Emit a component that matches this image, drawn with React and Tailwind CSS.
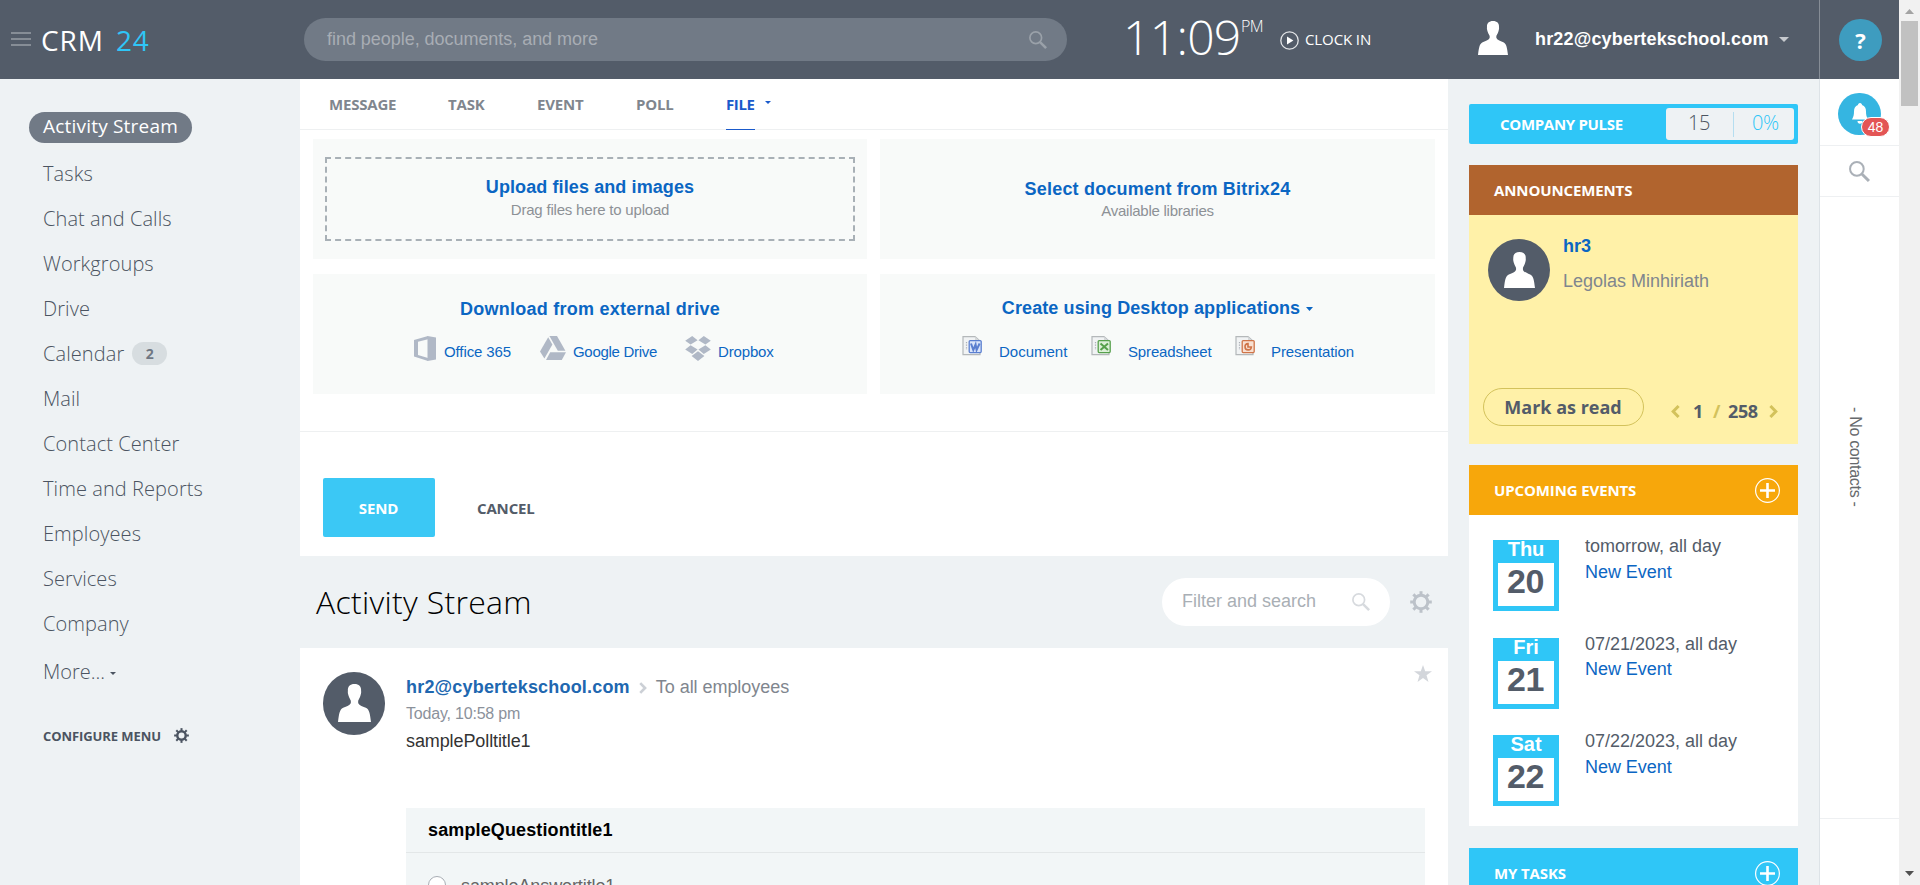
import React from 'react';

const ARIAL = "font-['Liberation_Sans',Arial,sans-serif]";

function Person({ className }) {
  return (
    <svg className={className} viewBox="0 0 90 102" preserveAspectRatio="none" fill="currentColor">
      <path d="M45 0C57 0 64 7 63 18C64 24 62 28 61 32C59 38 56 42 55 45V50C57 57 66 59 76 64C86 69 87 80 90 102H0C3 80 4 69 14 64C24 59 33 57 35 50V45C34 42 31 38 29 32C28 28 26 24 27 18C26 7 33 0 45 0Z" />
    </svg>
  );
}

function Gear({ className, r = 6.8, sw = 3 }) {
  return (
    <svg className={className} viewBox="0 0 22 22" fill="none" stroke="currentColor">
      <circle cx="11" cy="11" r={r} strokeWidth={sw} />
      {[0, 45, 90, 135, 180, 225, 270, 315].map((a) => (
        <path key={a} d="M11 0.2V4" strokeWidth="3" transform={`rotate(${a} 11 11)`} />
      ))}
    </svg>
  );
}

function Magnifier({ className }) {
  return (
    <svg className={className} viewBox="0 0 20 20" fill="none" stroke="currentColor">
      <circle cx="7.5" cy="7.5" r="6.5" strokeWidth="1.9" />
      <path d="M12.3 12.3L19 19" strokeWidth="2.8" />
    </svg>
  );
}

function Plus() {
  return (
    <svg className="h-[25px] w-[25px]" viewBox="0 0 25 25" fill="none" stroke="#fff">
      <circle cx="12.5" cy="12.5" r="11.9" strokeWidth="1.2" />
      <path d="M12.5 5V20M5 12.5H20" strokeWidth="2.6" />
    </svg>
  );
}

function Chevron({ className, flip }) {
  return (
    <svg className={className} viewBox="0 0 9 13" fill="none" stroke="currentColor" strokeWidth="3">
      <path d={flip ? 'M7.6 1L2.2 6.5L7.6 12' : 'M1.4 1L6.8 6.5L1.4 12'} />
    </svg>
  );
}

function Caret({ className }) {
  return (
    <svg className={className} viewBox="0 0 10 6" preserveAspectRatio="none" fill="currentColor">
      <path d="M0 0H10L5 6Z" />
    </svg>
  );
}

function OfficeFile({ color, light, children }) {
  return (
    <svg className="h-[20px] w-[20px] shrink-0" viewBox="0 0 20 20">
      <path d="M1 .7H13L18 5V18.6H1Z" fill="#f1f3f4" stroke="#b4b8ba" strokeWidth="1.2" />
      <path d="M13 .7V5H18Z" fill="#d5d8da" />
      <path d="M4.5 6V14" stroke="#a9adb5" strokeWidth="1.2" strokeDasharray="1.2 1.4" />
      <rect x="7.2" y="4.6" width="12" height="12" rx="1" fill={light} stroke={color} strokeWidth="1.3" />
      <g fill="none" stroke={color} strokeWidth="2">{children}</g>
    </svg>
  );
}

function Header() {
  return (
    <header className="flex h-[79px] w-full shrink-0 bg-[#535c69] text-white">
      <div className="flex w-[304px] items-center pb-0.5 pl-[11px]">
        <svg className="h-[14px] w-5" viewBox="0 0 20 14" fill="#868d96">
          <path d="M0 0H20V2H0ZM0 6H20V8H0ZM0 12H20V14H0Z" />
        </svg>
        <div className="mt-[2px] ml-[10px] text-[28px] leading-[40px] font-medium">
          <span className="inline-block w-[75px] tracking-[0.9px]">CRM</span>
          <span className="tracking-[0.8px] text-[#2fc6f7]">24</span>
        </div>
      </div>
      <div className={`mt-[18px] flex h-[43px] w-[763px] items-center justify-between rounded-full bg-[#717a86] pr-[20px] pl-[23px] text-lg tracking-[-0.04px] text-[#a8adb4] ${ARIAL}`}>
        <span className="pb-[2px]">find people, documents, and more</span>
        <Magnifier className="h-[18px] w-[18px] text-[#9aa1a9]" />
      </div>
      <div className="flex w-[411px] pl-[56px]">
        <span className="mt-[9px] w-[118px] text-5xl leading-[56px] font-light tracking-[-0.7px]">11:09</span>
        <span className="mt-[14px] w-[39px] text-base leading-6 font-light tracking-[-0.6px]">PM</span>
        <svg className="mt-[31px] h-[19px] w-[19px]" viewBox="0 0 19 19" fill="none" stroke="#e4e6e8" strokeWidth="1.3">
          <circle cx="9.5" cy="9.5" r="8.7" />
          <path d="M7 5.6L13.4 9.5L7 13.4Z" fill="#fff" stroke="none" />
        </svg>
        <span className="mt-[29px] ml-1.5 text-[15px] leading-5 tracking-[-0.1px]">CLOCK IN</span>
      </div>
      <div className="flex w-[341px] items-center">
        <Person className="mb-1 h-[34px] w-[30px]" />
        <span className={`mb-0.5 ml-[27px] w-[244px] text-lg font-bold tracking-[0.17px] ${ARIAL}`}>hr22@cybertekschool.com</span>
        <Caret className="mb-px h-[5px] w-[10px] text-[#c6c9ce]" />
      </div>
      <div className="flex w-20 justify-center border-l border-[#868d96] pt-[19px] pl-[2px]">
        <div className="flex h-[42px] w-[43px] items-center justify-center rounded-full bg-[#3e9cbf] text-[22px] font-bold">?</div>
      </div>
    </header>
  );
}

const MENU = ['Tasks', 'Chat and Calls', 'Workgroups', 'Drive', 'Calendar', 'Mail', 'Contact Center', 'Time and Reports', 'Employees', 'Services', 'Company'];

function Sidebar() {
  return (
    <nav className="w-[300px] shrink-0 pt-[33px] text-[20px] font-light text-[#4b5461]">
      <div className="ml-[29px] h-[31px] w-[163px] rounded-full bg-[#717a86] pl-[14px] text-[19px] leading-[28px] font-medium tracking-[0.2px] text-white">Activity Stream</div>
      <div className="mt-[7px] pl-[43px]">
        {MENU.map((m) => (
          <div key={m} className="flex h-[45px] items-center pt-[2px] tracking-[0.08px]">
            {m}
            {m === 'Calendar' && (
              <span className="ml-[8px] flex h-[23px] w-[35px] items-center justify-center rounded-full bg-[#d7dde0] text-[14px] font-bold text-[#6f7783]">2</span>
            )}
          </div>
        ))}
        <div className="mt-1 flex h-[45px] items-center pt-px">
          More...
          <Caret className="mt-0.5 ml-[5px] h-[3px] w-[6px]" />
        </div>
        <div className="mt-[29px] flex h-6 items-center text-[13px] font-bold tracking-[-0.08px]">
          <span className="w-[131px] pt-[3px]">CONFIGURE MENU</span>
          <Gear className="h-[15px] w-[15px]" r={6.2} sw={3.6} />
        </div>
      </div>
    </nav>
  );
}

function Drives() {
  return (
    <div className="flex pt-[15px] pl-[101px] text-left text-[15px] leading-[32px] font-normal">
      <svg className="h-[25px] w-[22px]" viewBox="0 0 22 25" fill="#b0b8c6">
        <path fillRule="evenodd" d="M0 4L14 0V3.300L4 5.700V19L14 22V25L0 20.500Z" />
        <path d="M13.500 0.100L22 1.500V23.500L13.500 25Z" />
      </svg>
      <span className="ml-2 w-24 tracking-[-0.1px]">Office 365</span>
      <svg className="h-6 w-[26px]" viewBox="0 0 26 24" fill="#b0b8c6">
        <path d="M8.2 1.3L12.4 8.4L4.4 22.5L0 15.5Z" />
        <path d="M9.4 0H17L25.4 14.8H17.8Z" />
        <path d="M10.2 16.3H26L21.8 24H6Z" />
      </svg>
      <span className="ml-[7px] w-28 tracking-[-0.3px]">Google Drive</span>
      <svg className="h-[25px] w-[26px]" viewBox="0 0 26 25" fill="#b0b8c6">
        <path d="M7.2 0L12.6 4.2L5.6 8.6L.2 4.7ZM18.8 0L13.4 4.2L20.4 8.6L25.8 4.7ZM5.6 9.2L12.6 13.6L7.2 18L.2 13.5ZM20.4 9.2L13.4 13.6L18.8 18L25.8 13.5ZM13 15.2L19.4 20L13 25L6.6 20Z" />
      </svg>
      <span className="ml-[7px] tracking-[-0.15px]">Dropbox</span>
    </div>
  );
}

function Composer() {
  const box = 'h-[120px] bg-[#f8faf9] text-center';
  const title = 'text-lg leading-6 font-bold text-[#0b66c3]';
  const sub = 'text-[15px] text-[#8d9196]';
  return (
    <section className="h-[477px] bg-white">
      <div className="flex h-[51px] border-b border-[#eef0f1] pl-[29px] text-[15px] leading-[51px] font-bold tracking-[-0.2px] text-[#80868e]">
        <span className="w-[119px]">MESSAGE</span>
        <span className="w-[89px]">TASK</span>
        <span className="w-[99px]">EVENT</span>
        <span className="w-[90px]">POLL</span>
        <span className="h-[51px] w-[29px] border-b border-[#1a5acb] tracking-[-0.4px] text-[#1a5acb]">FILE</span>
        <Caret className="mt-[22px] ml-2.5 h-[3px] w-[6px] text-[#1a5acb]" />
      </div>
      <div className={`mt-[9px] flex gap-x-[13px] px-[13px] ${ARIAL}`}>
        <div className="flex w-[554px] flex-col gap-[15px]">
          <div className={`${box} px-3 pt-[18px]`}>
            <div className="h-[84px] border-2 border-dashed border-[#a8b0b6] pt-[16px]">
              <div className={`${title} tracking-[0.1px]`}>Upload files and images</div>
              <div className={`${sub} leading-[22px] tracking-[-0.2px]`}>Drag files here to upload</div>
            </div>
          </div>
          <div className={`${box} ${title} pt-[23px] text-center`}>
            <div className="tracking-[0.25px]">Download from external drive</div>
            <Drives />
          </div>
        </div>
        <div className="flex w-[555px] flex-col gap-[15px]">
          <div className={`${box} pt-[38px]`}>
            <div className={`${title} tracking-[0.2px]`}>Select document from Bitrix24</div>
            <div className={`${sub} leading-5 tracking-[-0.25px]`}>Available libraries</div>
          </div>
          <div className={`${box} ${title} pt-[22px]`}>
            <div className="flex items-center justify-center tracking-[0.1px]">
              Create using Desktop applications
              <Caret className="mt-0.5 ml-[6px] h-[4px] w-[7px]" />
            </div>
            <div className="flex pt-4 pl-[82px] text-[15px] leading-[32px] font-normal">
              <OfficeFile color="#5b7fd0" light="#dbe5fa"><path d="M9 7.5L11.3 14L13.6 8.5L14.6 14L17.6 7.5" /></OfficeFile>
              <span className="ml-[17px] w-[92px] text-left">Document</span>
              <OfficeFile color="#56a04c" light="#dcefd8"><path d="M9.5 7.5L17 14M17 7.5L9.5 14" /></OfficeFile>
              <span className="ml-[17px] w-[107px] text-left tracking-[-0.15px]">Spreadsheet</span>
              <OfficeFile color="#cf7448" light="#f8e0d2"><path d="M13 7.500A3.200 3.200 0 1 0 16.400 11H13Z" strokeWidth="1.6" /></OfficeFile>
              <span className="ml-[16px] tracking-[-0.1px]">Presentation</span>
            </div>
          </div>
        </div>
      </div>
      <div className="mt-[37px] flex border-t border-[#eef0f1] pt-[46px] pl-[23px] text-[15px] leading-[60px] font-bold tracking-[-0.15px]">
        <button className="h-[59px] w-28 rounded-[2px] bg-[#3bc8f5] pr-px text-white">SEND</button>
        <span className="ml-[42px] text-[#535c69]">CANCEL</span>
      </div>
    </section>
  );
}

function Post() {
  return (
    <section className="flex h-[237px] overflow-hidden bg-white pt-6 pr-[16px] pl-[23px]">
      <div className="flex h-[63px] w-[62px] shrink-0 justify-center rounded-full bg-[#535c69] pt-3 text-white">
        <Person className="h-[38px] w-[33px]" />
      </div>
      <div className={`ml-[21px] w-[1019px] shrink-0 text-lg leading-[27px] ${ARIAL}`}>
        <div className="mt-[2px] flex items-center">
          <span className="font-bold tracking-[0.19px] text-[#2067b0]">hr2@cybertekschool.com</span>
          <Chevron className="mr-[9px] ml-[9px] h-[12px] w-[8px] text-[#ccd0d6]" />
          <span className="tracking-[-0.05px] text-[#80868e]">To all employees</span>
        </div>
        <div className="text-base leading-[26px] tracking-[-0.2px] text-[#8b919b]">Today, 10:58 pm</div>
        <div className="mt-px tracking-[-0.1px] text-[#333]">samplePolltitle1</div>
        <div className="mt-[53px] h-[90px] bg-[#f2f6f7]">
          <div className="border-b border-[#e3e7e8] pl-[22px] leading-[44px] font-bold tracking-[0.13px] text-black">sampleQuestiontitle1</div>
          <div className="flex pt-[23px] pl-[22px]">
            <span className="h-[18px] w-[18px] rounded-full border border-[#a8adb4] bg-white" />
            <span className="ml-[15px] leading-[20px] tracking-[-0.1px] text-[#666]">sampleAnswertitle1</span>
          </div>
        </div>
      </div>
      <svg className="-mt-[7px] -ml-[11px] h-[17px] w-[18px] shrink-0" viewBox="0 0 18 17" fill="#d3d6db">
        <path d="M9 0L11.2 6.3H18L12.5 10.3L14.5 17L9 13L3.5 17L5.5 10.3L0 6.3H6.8Z" />
      </svg>
    </section>
  );
}

const EVENTS = [
  ['Thu', '20', 'tomorrow, all day', 'mb-[27px]', 'leading-[26px]'],
  ['Fri', '21', '07/21/2023, all day', 'mb-[26px]', 'pt-px leading-[25px]'],
  ['Sat', '22', '07/22/2023, all day', '', 'leading-[26px]'],
];

function Right() {
  const head = 'flex h-[50px] shrink-0 items-center justify-between pl-[25px] pr-[18px] text-[15px] font-bold tracking-[-0.12px] text-white';
  return (
    <aside className="flex w-[371px] shrink-0 flex-col overflow-hidden px-[21px] pt-[25px]">
      <div className="flex h-10 shrink-0 items-center justify-between rounded-[2px] bg-[#2fc6f7] pr-1 pl-[31px] text-[15px] font-bold tracking-[-0.3px] text-white">
        COMPANY PULSE
        <div className="flex h-8 w-32 items-center rounded-[3px] bg-[#eef2f4] text-xl font-light tracking-[-0.5px]">
          <span className="w-[67px] pr-px pb-[2px] text-center text-[#4b5461]">15</span>
          <span className="h-[25px] w-px bg-[#b5def0]" />
          <span className="w-[60px] pb-[2px] pl-[18px] text-[#2fc6f7]">0%</span>
        </div>
      </div>
      <div className={`${head} mt-[21px] bg-[#b1642e]`}>ANNOUNCEMENTS</div>
      <div className="flex h-[229px] shrink-0 flex-col justify-between bg-[#fff1a8]">
        <div className="flex pt-6 pl-[19px]">
          <div className="flex h-[62px] w-[62px] justify-center rounded-full bg-[#535c69] pt-[13px] text-white">
            <Person className="h-9 w-[31px]" />
          </div>
          <div className={`-mt-[10px] ml-[13px] text-lg leading-[35px] ${ARIAL}`}>
            <div className="font-bold text-[#0b66c3]">hr3</div>
            <div className="text-[#80868e]">Legolas Minhiriath</div>
          </div>
        </div>
        <div className="flex pb-[18px] pl-3.5 text-lg font-bold text-[#535c69]">
          <button className="h-[38px] w-[161px] rounded-full border border-[#d3c25b] pr-px leading-[35px]">Mark as read</button>
          <div className="flex items-center pt-[9px] pl-[27px]">
            <Chevron flip className="h-[13px] w-[9px] text-[#d3c25b]" />
            <span className="-mt-0.5 ml-[13px] w-[20px]">1</span>
            <span className="-mt-0.5 w-[15px] text-[#d3c25b]">/</span>
            <span className="-mt-0.5 w-[41px] tracking-[-0.4px]">258</span>
            <Chevron className="h-[13px] w-[9px] text-[#d3c25b]" />
          </div>
        </div>
      </div>
      <div className={`${head} mt-[21px] bg-[#f7a70b]`}>UPCOMING EVENTS<Plus /></div>
      <div className={`h-[311px] shrink-0 bg-white pt-[25px] pl-6 ${ARIAL}`}>
        {EVENTS.map(([d, n, t, mb, lead]) => (
          <div key={d} className={`flex ${mb}`}>
            <div className="h-[71px] w-[66px] bg-[#2fc6f7] px-[5px] text-center font-bold">
              <div className="h-[23px] text-[20px] leading-[19px] text-white">{d}</div>
              <div className="h-[43px] bg-white pr-px text-[34px] leading-[37px] tracking-[-0.5px] text-[#535c69]">{n}</div>
            </div>
            <div className={`-mt-[7px] ml-[26px] text-lg text-[#535c69] ${lead}`}>
              <div>{t}</div>
              <div className="tracking-[-0.05px] text-[#0b66c3]">New Event</div>
            </div>
          </div>
        ))}
      </div>
      <div className={`${head} mt-[22px] bg-[#2fc6f7]`}>MY TASKS<Plus /></div>
    </aside>
  );
}

function Rail() {
  return (
    <div className="flex w-20 shrink-0 flex-col border-l border-[#dde3e7] bg-white">
      <div className="flex h-[67px] justify-center border-b border-[#eef0f2] pt-[14px]">
        <div className="relative h-[42px] w-[43px] rounded-full bg-[#35b5e1]">
          <svg className="mt-[10px] ml-[14px] h-[21px] w-[16px]" viewBox="0 0 16 21" fill="#fff">
            <path d="M8 0C9.3 0 10 1 10 2C13 3 14 5.5 14 8.5C14 12 14.5 13.5 16 16.5H0C1.500 13.500 2 12 2 8.500C2 5.500 3 3 6 2C6 1 6.700 0 8 0ZM5.500 18H10.500C10.500 19.800 9.500 20.800 8 20.800C6.500 20.800 5.500 19.800 5.500 18Z" />
          </svg>
          <span className={`absolute top-[24px] left-[23px] flex h-[20px] w-[29px] items-center justify-center rounded-full border border-white bg-[#e35555] text-sm text-white ${ARIAL}`}>48</span>
        </div>
      </div>
      <div className="flex h-[51px] justify-center border-b border-[#eef0f2] pt-[15px]">
        <Magnifier className="h-[21px] w-[21px] text-[#aab0b7]" />
      </div>
      <div className={`flex h-[622px] shrink-0 justify-center border-b border-[#eef0f2] pt-[210px] text-base tracking-[-0.3px] text-[#66696c] ${ARIAL}`}>
        <span className="h-[104px] pr-[10px] leading-5 [writing-mode:vertical-rl]">- No contacts -</span>
      </div>
    </div>
  );
}

export default function App() {
  return (
    <div className="flex h-[885px] w-[1920px] overflow-hidden bg-[#eef2f4] font-['Open_Sans',sans-serif]">
      <div className="flex w-[1899px] flex-col">
        <Header />
        <div className="flex h-[806px]">
          <Sidebar />
          <main className="w-[1148px] shrink-0">
            <Composer />
            <div className="flex h-[92px] items-center pl-4">
              <h1 className="flex-1 pb-px text-[32px] font-light tracking-[0.3px] text-black">Activity Stream</h1>
              <div className={`flex h-12 w-[228px] items-center justify-between rounded-full bg-white pr-5 pl-[20px] text-lg text-[#a9afb5] ${ARIAL}`}>
                <span className="pb-0.5">Filter and search</span>
                <Magnifier className="h-[18px] w-[18px] text-[#d7dade]" />
              </div>
              <Gear className="mr-4 ml-[20px] h-[22px] w-[22px] text-[#bcc2c9]" />
            </div>
            <Post />
          </main>
          <Right />
          <Rail />
        </div>
      </div>
      <div className="flex w-[21px] flex-col items-center justify-between bg-[#f1f1f1] py-[9px]">
        <div className="flex flex-col items-center">
          <Caret className="h-[5px] w-[9px] rotate-180 text-[#a3a3a3]" />
          <div className="mt-[7px] h-[85px] w-[17px] bg-[#c1c1c1]" />
        </div>
        <Caret className="h-[5px] w-[9px] text-[#505050]" />
      </div>
    </div>
  );
}
